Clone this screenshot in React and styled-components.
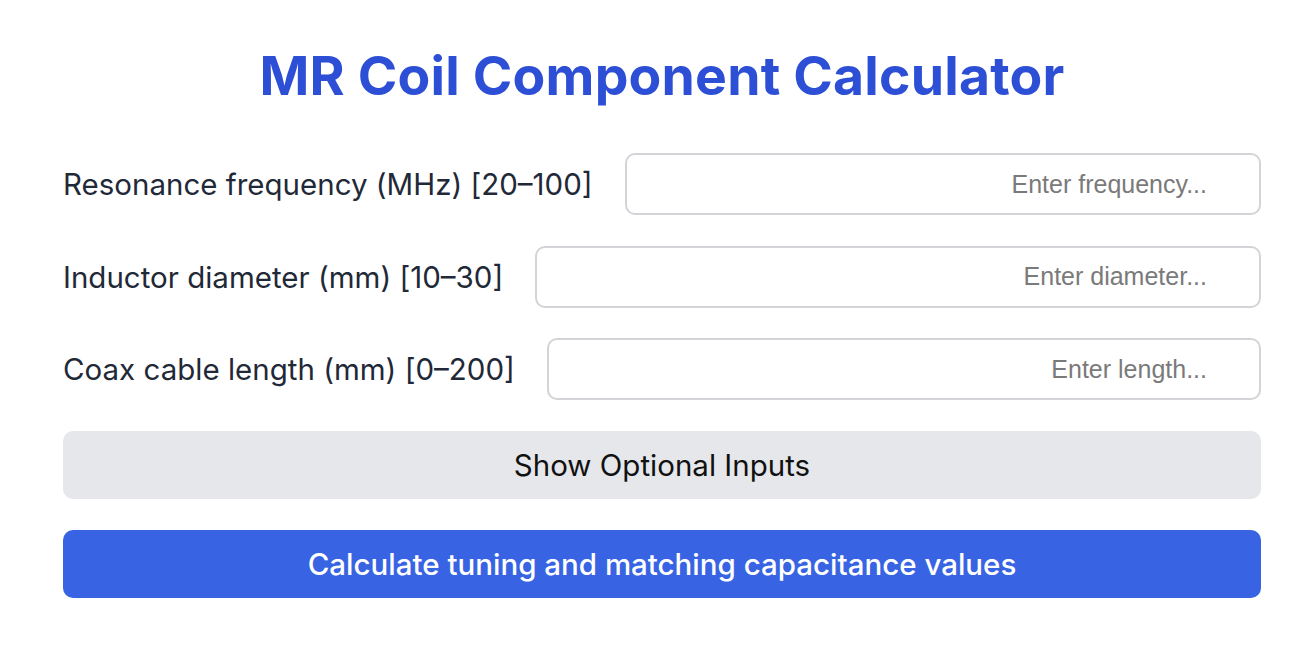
import React from 'react';
import styled, { createGlobalStyle } from 'styled-components';

const GlobalStyle = createGlobalStyle`
  html, body {
    margin: 0;
    padding: 0;
    background: #ffffff;
  }
  body {
    font-family: Inter, "Noto Sans", sans-serif;
    color: #1f2937;
  }
`;

const fields = [
  { label: 'Resonance frequency (MHz) [20–100]', placeholder: 'Enter frequency...' },
  { label: 'Inductor diameter (mm) [10–30]', placeholder: 'Enter diameter...' },
  { label: 'Coax cable length (mm) [0–200]', placeholder: 'Enter length...' },
];

const App = () => (
  <>
    <GlobalStyle />
    <Page>
      <Title>MR Coil Component Calculator</Title>
      <Form>
        {fields.map((f) => (
          <Row key={f.label}>
            <Label>{f.label}</Label>
            <Input type="text" placeholder={f.placeholder} />
          </Row>
        ))}
        <Button variant="secondary">Show Optional Inputs</Button>
        <Button variant="primary">Calculate tuning and matching capacitance values</Button>
      </Form>
    </Page>
  </>
);

const Page = styled.div`
  width: 1198px;
  margin-left: 63px;
  padding-top: 44px;
  display: flex;
  flex-direction: column;
`;

const Title = styled.h1`
  margin: 0 0 45px;
  text-align: center;
  font-size: 53.5px;
  line-height: 64px;
  font-weight: 700;
  color: #2d4fd6;
  letter-spacing: 0.2px;
`;

const Form = styled.div`
  display: flex;
  flex-direction: column;
  gap: 30.5px;
`;

const Row = styled.div`
  display: flex;
  align-items: center;
  gap: 32px;
`;

const Label = styled.label`
  font-size: 29.5px;
  color: #1f2937;
  white-space: nowrap;
`;

const Input = styled.input`
  flex: 1;
  min-width: 0;
  height: 62px;
  box-sizing: border-box;
  border: 2px solid #d4d4d8;
  border-radius: 10px;
  padding: 0 52px 0 16px;
  text-align: right;
  font-family: "Liberation Sans", Arial, sans-serif;
  font-size: 25px;
  color: #111827;
  outline: none;

  &::placeholder {
    color: #7a7a7a;
  }
`;

const Button = styled.button`
  width: 100%;
  height: 68.5px;
  border: none;
  border-radius: 10px;
  font-family: Inter, "Noto Sans", sans-serif;
  font-size: 29.5px;
  cursor: pointer;
  background: ${({ variant }) => (variant === 'primary' ? '#3864e3' : '#e5e7eb')};
  color: ${({ variant }) => (variant === 'primary' ? '#ffffff' : '#111111')};
  font-weight: ${({ variant }) => (variant === 'primary' ? 500 : 400)};
`;

export default App;
